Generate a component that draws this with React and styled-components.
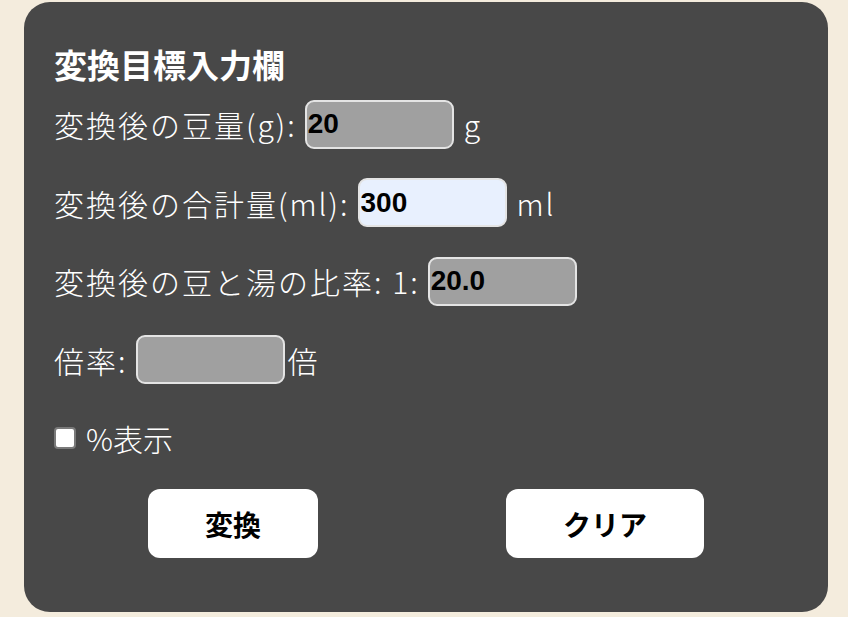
import React, { useState } from 'react';
import styled, { createGlobalStyle } from 'styled-components';

const GlobalStyle = createGlobalStyle`
  html, body {
    margin: 0;
    padding: 0;
    background: #f4ecdd;
  }
  body {
    font-family: "Noto Sans CJK JP", "Noto Sans", sans-serif;
  }
`;

const Page = styled.div`
  padding: 2px 20px 6px 24px;
`;

const Card = styled.div`
  width: 804px;
  box-sizing: border-box;
  background: #484848;
  border-radius: 26px;
  padding: 38px 30px 54px 30px;
  color: #fff;
`;

const Title = styled.h2`
  margin: 0 0 12px 0;
  font-size: 33px;
  line-height: 48px;
  font-weight: 700;
  color: #fff;
`;

const Row = styled.div`
  display: flex;
  align-items: center;
  height: 48px;
  margin-bottom: 30.5px;
  font-size: 30px;
  font-weight: 300;
  letter-spacing: 2px;
  white-space: pre;
`;

const Label = styled.span`
  margin-right: ${(p) => p.$gap ?? 8}px;
`;

const Unit = styled.span`
  margin-left: ${(p) => p.$gap ?? 10}px;
`;

const NumInput = styled.input`
  box-sizing: border-box;
  width: 149px;
  height: 49px;
  margin: 0;
  padding: 0 1px;
  border: 2px solid #e4e4e4;
  border-radius: 9px;
  background: ${(p) => (p.$active ? '#e8f0fe' : '#a0a0a0')};
  color: #000;
  font-family: "Liberation Sans", Arial, sans-serif;
  font-weight: 700;
  font-size: 28px;
  letter-spacing: 0;
  outline: none;
`;

const CheckRow = styled(Row)`
  margin-bottom: 27px;
  letter-spacing: 0;
`;

const Check = styled.input`
  appearance: none;
  box-sizing: border-box;
  width: 22px;
  height: 22px;
  margin: 0 10px 0 0;
  background: #fff;
  border: 2px solid #7a7a7a;
  border-radius: 4px;
  cursor: pointer;

  &:checked {
    background: #0075ff;
    border-color: #0075ff;
  }
`;

const Buttons = styled.div`
  display: flex;
  justify-content: space-around;
`;

const Button = styled.button`
  height: 69px;
  padding: 0 57px;
  border: none;
  border-radius: 12px;
  background: #fff;
  color: #000;
  font-family: "Noto Sans CJK JP", sans-serif;
  font-size: 28px;
  font-weight: 700;
  cursor: pointer;
`;

export default function App() {
  const [beans, setBeans] = useState('20');
  const [total, setTotal] = useState('300');
  const [ratio, setRatio] = useState('20.0');
  const [rate, setRate] = useState('');
  const [percent, setPercent] = useState(false);

  const clear = () => {
    setBeans('');
    setTotal('');
    setRatio('');
    setRate('');
  };

  return (
    <>
      <GlobalStyle />
      <Page>
        <Card>
          <Title>変換目標入力欄</Title>
          <Row>
            <Label>変換後の豆量(g):</Label>
            <NumInput value={beans} onChange={(e) => setBeans(e.target.value)} />
            <Unit>g</Unit>
          </Row>
          <Row>
            <Label>変換後の合計量(ml):</Label>
            <NumInput $active value={total} onChange={(e) => setTotal(e.target.value)} />
            <Unit>ml</Unit>
          </Row>
          <Row>
            <Label>変換後の豆と湯の比率: 1:</Label>
            <NumInput value={ratio} onChange={(e) => setRatio(e.target.value)} />
          </Row>
          <Row>
            <Label>倍率:</Label>
            <NumInput value={rate} onChange={(e) => setRate(e.target.value)} />
            <Unit $gap={3}>倍</Unit>
          </Row>
          <CheckRow>
            <Check type="checkbox" checked={percent} onChange={(e) => setPercent(e.target.checked)} />
            <span>%表示</span>
          </CheckRow>
          <Buttons>
            <Button>変換</Button>
            <Button onClick={clear}>クリア</Button>
          </Buttons>
        </Card>
      </Page>
    </>
  );
}
